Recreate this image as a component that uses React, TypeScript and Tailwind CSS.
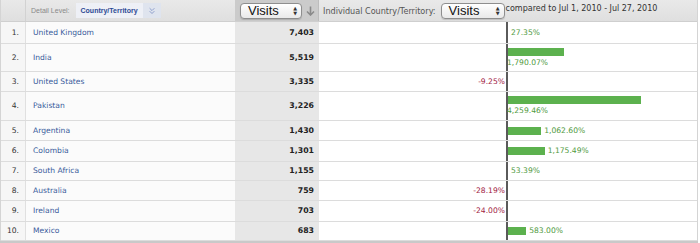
import { ChevronsDown } from 'lucide-react';

interface Row {
  country: string;
  visits: string;
  change: number;
  label: string;
  h: string;
  stacked?: boolean;
}

// bar scale: Pakistan 4,259.46% is 133px
const SCALE = 133 / 4259.46;

const rows: Row[] = [
  { country: 'United Kingdom', visits: '7,403', change: 27.35, label: '27.35%', h: 'h-[22px]' },
  { country: 'India', visits: '5,519', change: 1790.07, label: '1,790.07%', h: 'h-[28px]', stacked: true },
  { country: 'United States', visits: '3,335', change: -9.25, label: '-9.25%', h: 'h-[20px]' },
  { country: 'Pakistan', visits: '3,226', change: 4259.46, label: '4,259.46%', h: 'h-[29px]', stacked: true },
  { country: 'Argentina', visits: '1,430', change: 1062.6, label: '1,062.60%', h: 'h-[20px]' },
  { country: 'Colombia', visits: '1,301', change: 1175.49, label: '1,175.49%', h: 'h-[21px]' },
  { country: 'South Africa', visits: '1,155', change: 53.39, label: '53.39%', h: 'h-[19px]' },
  { country: 'Australia', visits: '759', change: -28.19, label: '-28.19%', h: 'h-[20px]' },
  { country: 'Ireland', visits: '703', change: -24.0, label: '-24.00%', h: 'h-[21px]' },
  { country: 'Mexico', visits: '683', change: 583.0, label: '583.00%', h: 'h-[19px]' },
];

const MacSelect = ({ width }: { width: string }) => (
  <div
    className={`${width} h-[16px] flex items-center justify-between rounded-[4px] border border-[#8e8e8e] bg-gradient-to-b from-white to-[#e9e9e9] pl-[7px] pr-[4px] shadow-[0_1px_1px_rgba(0,0,0,0.15)]`}
  >
    <span className="text-[13px] leading-none text-[#111] font-['Liberation_Sans',sans-serif]">Visits</span>
    <span className="flex flex-col items-center leading-none text-[#333]">
      <span className="text-[5px] leading-[5px]">▲</span>
      <span className="text-[5px] leading-[5px]">▼</span>
    </span>
  </div>
);

const ChangeCell = ({ row }: { row: Row }) => {
  const w = Math.abs(row.change) * SCALE;
  const positive = row.change >= 0;
  return (
    <div className="flex-1 grid grid-cols-[187px_2px_1fr] h-full">
      <div className="flex items-center justify-end pr-[1px]">
        {!positive && <span className="text-[#a1213f]">{row.label}</span>}
      </div>
      <div className="bg-[#5a5a5a]" />
      {positive &&
        (row.stacked ? (
          <div className="flex flex-col justify-center">
            <div className="h-[8px] bg-[#5cb14e]" style={{ width: w }} />
            <span className="text-[#4f9a3e] mt-[2px] -ml-[1px]">{row.label}</span>
          </div>
        ) : (
          <div className="flex items-center">
            {w >= 3 && <div className="h-[8px] bg-[#5cb14e]" style={{ width: w }} />}
            <span className="text-[#4f9a3e] pl-[3px]">{row.label}</span>
          </div>
        ))}
    </div>
  );
};

export default function App() {
  return (
    <div className="w-[700px] h-[243px] bg-white font-['DejaVu_Sans',sans-serif] text-[7.6px] leading-[10px]">
      <div className="w-[698px] border-l border-r border-[#d4d4d4]">
        {/* header */}
        <div className="flex h-[22px] bg-gradient-to-b from-[#e9e9e9] to-[#dfdfdf] border-b border-[#cfcfcf]">
          <div className="w-[25px] border-r border-[#d2d2d2]" />
          <div className="w-[209px] flex items-center pl-[5px]">
            <span className="text-[#8a8a8a] text-[7px] font-['Liberation_Sans',sans-serif]">Detail Level:</span>
            <div className="ml-[6px] flex items-stretch h-[15px] bg-[#eef0f6]">
              <span className="flex items-center px-[5px] text-[7px] font-bold text-[#2d4a94] font-['Liberation_Sans',sans-serif]">
                Country/Territory
              </span>
              <span className="flex items-center justify-center w-[18px] bg-[#dfe4ee]">
                <ChevronsDown size={10} strokeWidth={2} className="text-[#7e90c4]" />
              </span>
            </div>
          </div>
          <div className="w-[84px] flex items-center bg-[#cbcbcb] pl-[5px] border-r border-[#bdbdbd]">
            <MacSelect width="w-[62px]" />
            <svg width="9" height="10" viewBox="0 0 9 10" className="ml-[4px]">
              <path d="M4.5 0.5 V8.5 M1 5.5 L4.5 9 L8 5.5" stroke="#8a8a8a" strokeWidth="1.6" fill="none" />
            </svg>
          </div>
          <div className="flex-1 flex items-center pl-[4px] text-[#555] text-[8.1px]">
            <span>Individual Country/Territory:</span>
            <div className="ml-[5px]">
              <MacSelect width="w-[64px]" />
            </div>
            <span className="ml-[1px] -mt-[4px] text-[#333] text-[8px]">compared to Jul 1, 2010 - Jul 27, 2010</span>
          </div>
        </div>

        {/* rows */}
        {rows.map((row, i) => (
          <div key={row.country} className={`flex ${row.h} border-b border-[#dcdcdc]`}>
            <div className="w-[25px] flex items-center justify-end pr-[6px] bg-[#f6f6f6] border-r border-[#e0e0e0] text-[#333]">
              {i + 1}.
            </div>
            <div className="w-[209px] flex items-center pl-[7px] bg-[#fbfbfb] text-[#3a5b9c]">
              {row.country}
            </div>
            <div className="w-[84px] flex items-center justify-end pr-[5px] bg-[#e7e7e7] font-bold text-[7.8px] text-[#222]">
              {row.visits}
            </div>
            <ChangeCell row={row} />
          </div>
        ))}
      </div>
      <div className="w-[698px] h-[2px] bg-[#c9c9c9]" />
    </div>
  );
}
